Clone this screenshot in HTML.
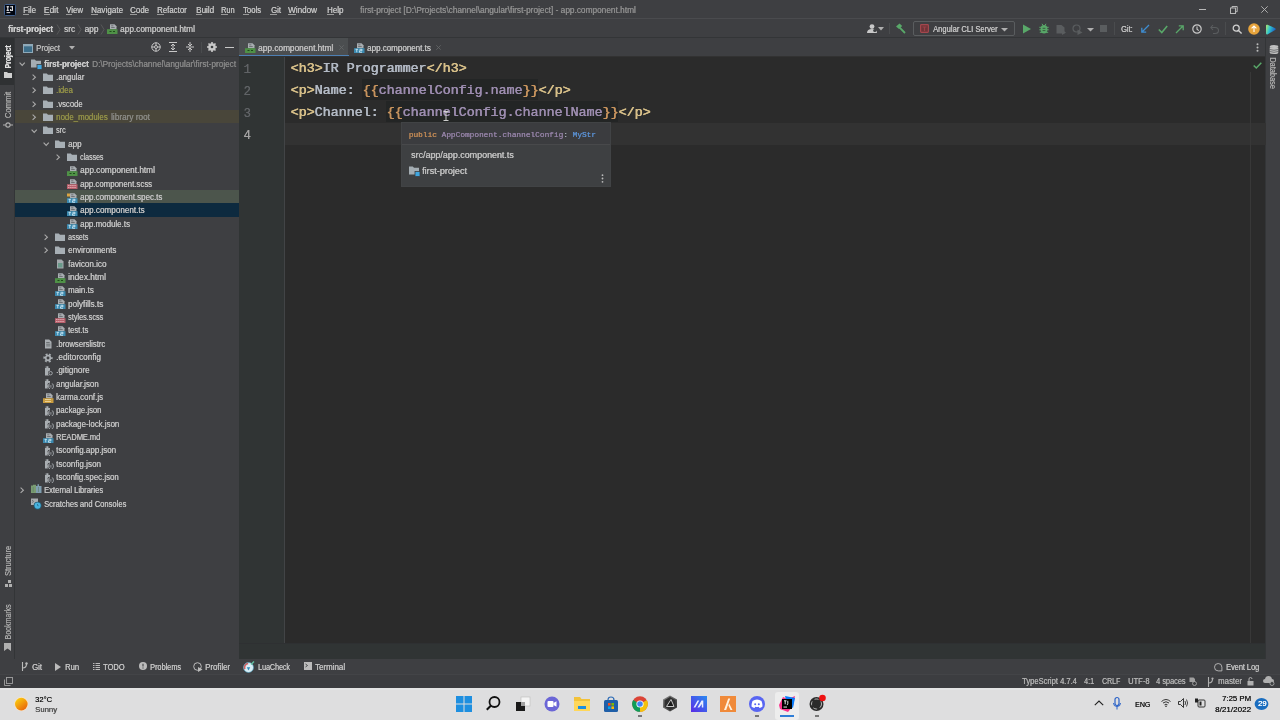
<!DOCTYPE html>
<html><head><meta charset="utf-8">
<style>
*{margin:0;padding:0;box-sizing:border-box}
html,body{-webkit-font-smoothing:antialiased;width:1280px;height:720px;overflow:hidden;background:#3E3F42;font-family:"Liberation Sans",sans-serif;color:#BBBBBB}
.a{position:absolute;white-space:nowrap}
#w div{text-shadow:0.3px 0 0 currentColor}
#w{position:absolute;left:0;top:0;width:1280px;height:720px;will-change:transform;overflow:hidden}
svg.a{overflow:visible}
</style></head><body>
<div id="w"><div class="a" style="left:0px;top:0px;width:1280px;height:720px;background:#3E3F42;"></div>
<div class="a" style="left:0px;top:18px;width:1280px;height:1px;background:#4A4B4E;"></div>
<div class="a" style="left:0px;top:37px;width:1280px;height:1px;background:#333537;"></div>
<div class="a" style="left:0px;top:38px;width:14px;height:621px;background:#3E3F42;"></div>
<div class="a" style="left:0px;top:38px;width:14px;height:47px;background:#2F3133;"></div>
<div class="a" style="left:14px;top:38px;width:1px;height:621px;background:#333537;"></div>
<div class="a" style="left:15px;top:38px;width:224px;height:621px;background:#3E3F42;"></div>
<div class="a" style="left:15px;top:56px;width:224px;height:1px;background:#37393B;"></div>
<div class="a" style="left:239px;top:38px;width:1027px;height:18px;background:#3E3F42;"></div>
<div class="a" style="left:239px;top:56px;width:1027px;height:1px;background:#323232;"></div>
<div class="a" style="left:239px;top:57px;width:46px;height:586px;background:#303434;"></div>
<div class="a" style="left:284px;top:57px;width:1px;height:586px;background:#424446;"></div>
<div class="a" style="left:285px;top:57px;width:981px;height:586px;background:#2B2B2B;"></div>
<div class="a" style="left:239px;top:643px;width:1027px;height:16px;background:#303434;"></div>
<div class="a" style="left:239px;top:643px;width:1027px;height:1px;background:#2E3032;"></div>
<div class="a" style="left:1266px;top:38px;width:14px;height:621px;background:#3E3F42;"></div>
<div class="a" style="left:1265px;top:38px;width:1px;height:621px;background:#333537;"></div>
<div class="a" style="left:0px;top:659px;width:1280px;height:16px;background:#3E3F42;"></div>
<div class="a" style="left:0px;top:675px;width:1280px;height:13px;background:#3C3D40;"></div>
<div class="a" style="left:0px;top:674px;width:1280px;height:1px;background:#434447;"></div>
<div class="a" style="left:0px;top:688px;width:1280px;height:32px;background:#DEDEDF;"></div>
<div class="a" style="left:0px;top:688px;width:1280px;height:1.5px;background:#E4E4E5;"></div>
<svg class="a" style="left:4px;top:4px;" width="12" height="12" viewBox="0 0 12 12"><rect x="0.5" y="0.5" width="11" height="11" rx="1" fill="#000510" stroke="#42608C" stroke-width="1"/><g fill="#F0F0F0"><rect x="2.5" y="2.3" width="2.6" height="1"/><rect x="3.3" y="2.3" width="1" height="4.4"/><rect x="2.5" y="5.8" width="2.6" height="1"/><rect x="6.2" y="2.3" width="2.7" height="1"/><rect x="7.9" y="2.3" width="1" height="4.4"/><rect x="6.1" y="5.8" width="2.8" height="1"/><rect x="6.1" y="5.0" width="0.9" height="1.6"/><rect x="2.5" y="8.2" width="3.8" height="0.9"/></g></svg>
<div class="a" style="left:23.40px;top:3.80px;font-size:8.4px;line-height:12px;color:#C2C2C2;transform:scaleX(0.9604);transform-origin:0 50%;text-decoration:none">File</div>
<div class="a" style="left:23px;top:14px;width:6px;height:0.7px;background:#9A9A9A;"></div>
<div class="a" style="left:43.80px;top:3.80px;font-size:8.4px;line-height:12px;color:#C2C2C2;text-decoration:none">Edit</div>
<div class="a" style="left:44px;top:14px;width:6px;height:0.7px;background:#9A9A9A;"></div>
<div class="a" style="left:65.60px;top:3.80px;font-size:8.4px;line-height:12px;color:#C2C2C2;transform:scaleX(0.9415);transform-origin:0 50%;text-decoration:none">View</div>
<div class="a" style="left:66px;top:14px;width:6px;height:0.7px;background:#9A9A9A;"></div>
<div class="a" style="left:90.60px;top:3.80px;font-size:8.4px;line-height:12px;color:#C2C2C2;transform:scaleX(0.9652);transform-origin:0 50%;text-decoration:none">Navigate</div>
<div class="a" style="left:91px;top:14px;width:7px;height:0.7px;background:#9A9A9A;"></div>
<div class="a" style="left:129.70px;top:3.80px;font-size:8.4px;line-height:12px;color:#C2C2C2;transform:scaleX(0.9461);transform-origin:0 50%;text-decoration:none">Code</div>
<div class="a" style="left:130px;top:14px;width:7px;height:0.7px;background:#9A9A9A;"></div>
<div class="a" style="left:157.00px;top:3.80px;font-size:8.4px;line-height:12px;color:#C2C2C2;transform:scaleX(0.9355);transform-origin:0 50%;text-decoration:none">Refactor</div>
<div class="a" style="left:157px;top:14px;width:7px;height:0.7px;background:#9A9A9A;"></div>
<div class="a" style="left:195.50px;top:3.80px;font-size:8.4px;line-height:12px;color:#C2C2C2;transform:scaleX(0.9636);transform-origin:0 50%;text-decoration:none">Build</div>
<div class="a" style="left:196px;top:14px;width:6px;height:0.7px;background:#9A9A9A;"></div>
<div class="a" style="left:221.30px;top:3.80px;font-size:8.4px;line-height:12px;color:#C2C2C2;transform:scaleX(0.8761);transform-origin:0 50%;text-decoration:none">Run</div>
<div class="a" style="left:221px;top:14px;width:7px;height:0.7px;background:#9A9A9A;"></div>
<div class="a" style="left:243.00px;top:3.80px;font-size:8.4px;line-height:12px;color:#C2C2C2;transform:scaleX(0.9179);transform-origin:0 50%;text-decoration:none">Tools</div>
<div class="a" style="left:243px;top:14px;width:6px;height:0.7px;background:#9A9A9A;"></div>
<div class="a" style="left:270.50px;top:3.80px;font-size:8.4px;line-height:12px;color:#C2C2C2;transform:scaleX(0.9317);transform-origin:0 50%;text-decoration:none">Git</div>
<div class="a" style="left:270px;top:14px;width:7px;height:0.7px;background:#9A9A9A;"></div>
<div class="a" style="left:288.40px;top:3.80px;font-size:8.4px;line-height:12px;color:#C2C2C2;transform:scaleX(0.9707);transform-origin:0 50%;text-decoration:none">Window</div>
<div class="a" style="left:288px;top:14px;width:8px;height:0.7px;background:#9A9A9A;"></div>
<div class="a" style="left:326.70px;top:3.80px;font-size:8.4px;line-height:12px;color:#C2C2C2;transform:scaleX(0.9435);transform-origin:0 50%;text-decoration:none">Help</div>
<div class="a" style="left:327px;top:14px;width:7px;height:0.7px;background:#9A9A9A;"></div>
<div class="a" style="left:359.50px;top:3.80px;font-size:8.4px;line-height:12px;color:#8E8E8E;transform:scaleX(0.9904);transform-origin:0 50%;">first-project [D:\Projects\channel\angular\first-project] - app.component.html</div>
<div class="a" style="left:1198.5px;top:9px;width:7px;height:1px;background:#B8B8B8;"></div>
<svg class="a" style="left:1230px;top:6px;" width="8" height="8" viewBox="0 0 8 8"><rect x="0.5" y="2" width="5" height="5.5" fill="none" stroke="#B8B8B8" stroke-width="1"/><path d="M2 2V0.5h5.2v5.2H5.5" fill="none" stroke="#B8B8B8" stroke-width="1"/></svg>
<svg class="a" style="left:1261px;top:6px;" width="7" height="7" viewBox="0 0 7 7"><path d="M0.3 0.3L6.7 6.7M6.7 0.3L0.3 6.7" stroke="#B8B8B8" stroke-width="0.9"/></svg>
<div class="a" style="left:8.10px;top:23.30px;font-size:8.4px;line-height:12px;color:#CCCCCC;transform:scaleX(0.9642);transform-origin:0 50%;font-weight:bold;">first-project</div>
<svg class="a" style="left:56px;top:24px;" width="5" height="11" viewBox="0 0 5 11"><path d="M1 0.5L4 5.5L1 10.5" fill="none" stroke="#5E6060" stroke-width="0.8"/></svg>
<div class="a" style="left:64.00px;top:23.30px;font-size:8.4px;line-height:12px;color:#C2C2C2;transform:scaleX(0.9824);transform-origin:0 50%;">src</div>
<svg class="a" style="left:77px;top:24px;" width="5" height="11" viewBox="0 0 5 11"><path d="M1 0.5L4 5.5L1 10.5" fill="none" stroke="#5E6060" stroke-width="0.8"/></svg>
<div class="a" style="left:84.40px;top:23.30px;font-size:8.4px;line-height:12px;color:#C2C2C2;">app</div>
<svg class="a" style="left:100px;top:24px;" width="5" height="11" viewBox="0 0 5 11"><path d="M1 0.5L4 5.5L1 10.5" fill="none" stroke="#5E6060" stroke-width="0.8"/></svg>
<svg class="a" style="left:107px;top:24px;" width="11" height="10" viewBox="0 0 11 10"><path d="M3 0.3h4.5l2 2v2.9H3z" fill="#A9AEB2"/><path d="M4.2 1.8h2.2M4.2 3.5h3.5" stroke="#55585A" stroke-width="0.7"/><rect x="0" y="5.2" width="10.5" height="4.8" fill="#4F9147"/><path d="M2.5 7.5h2M6 7.5h2" stroke="#1F4A1A" stroke-width="1.2"/></svg>
<div class="a" style="left:119.50px;top:23.30px;font-size:8.4px;line-height:12px;color:#C2C2C2;transform:scaleX(0.9854);transform-origin:0 50%;">app.component.html</div>
<div class="a" style="left:9.10px;top:56.60px;font-size:8.2px;line-height:10px;color:#E0E0E0;transform:translate(-50%,-50%) rotate(-90deg) scaleX(0.8345);font-weight:bold;">Project</div>
<svg class="a" style="left:4px;top:72px;" width="8" height="6" viewBox="0 0 8 6"><path d="M0 0h3l1 1h4v5H0z" fill="#D0D0D0"/></svg>
<div class="a" style="left:9.10px;top:105.40px;font-size:8.2px;line-height:10px;color:#A8A8A8;transform:translate(-50%,-50%) rotate(-90deg) scaleX(0.9347);">Commit</div>
<svg class="a" style="left:3px;top:121px;" width="10" height="8" viewBox="0 0 10 8"><circle cx="5" cy="4" r="2.2" fill="none" stroke="#B0B0B0" stroke-width="1.2"/><path d="M0 4h2.5M7.5 4H10" stroke="#B0B0B0" stroke-width="1.2"/></svg>
<div class="a" style="left:9.10px;top:561.00px;font-size:8.2px;line-height:10px;color:#A8A8A8;transform:translate(-50%,-50%) rotate(-90deg) scaleX(0.9017);">Structure</div>
<svg class="a" style="left:4px;top:580px;" width="8" height="8" viewBox="0 0 8 8"><rect x="4" y="0" width="3" height="3" fill="#B0B0B0"/><rect x="1" y="4" width="3" height="3" fill="#B0B0B0"/><rect x="5" y="4" width="3" height="3" fill="#B0B0B0"/></svg>
<div class="a" style="left:9.10px;top:621.60px;font-size:8.2px;line-height:10px;color:#A8A8A8;transform:translate(-50%,-50%) rotate(-90deg) scaleX(0.8534);">Bookmarks</div>
<svg class="a" style="left:4px;top:642.5px;" width="7" height="8" viewBox="0 0 7 8"><path d="M0 0h7v8L3.5 5.5L0 8z" fill="#B0B0B0"/></svg>
<svg class="a" style="left:23px;top:43.5px;" width="10" height="9" viewBox="0 0 10 9"><rect x="0.5" y="0.5" width="9" height="8" fill="#3D6E8A" stroke="#8FA9B8" stroke-width="1"/><rect x="0.5" y="0.5" width="9" height="1.8" fill="#8FA9B8"/></svg>
<div class="a" style="left:35.80px;top:41.80px;font-size:8.4px;line-height:12px;color:#BBBBBB;transform:scaleX(0.9180);transform-origin:0 50%;">Project</div>
<svg class="a" style="left:69px;top:46px;" width="6" height="4" viewBox="0 0 6 4"><path d="M0 0h6L3 3.5z" fill="#AFAFAF"/></svg>
<svg class="a" style="left:151px;top:42px;" width="10" height="10" viewBox="0 0 10 10"><circle cx="5" cy="5" r="4.2" fill="none" stroke="#C8C8C8" stroke-width="1"/><circle cx="5" cy="5" r="1.5" fill="none" stroke="#C8C8C8" stroke-width="1"/><path d="M5 0.5v2.5M5 7v2.5M0.5 5h2.5M7 5h2.5" stroke="#C8C8C8" stroke-width="1"/></svg>
<svg class="a" style="left:168px;top:42px;" width="10" height="10" viewBox="0 0 10 10"><path d="M1 0.5h8M1 9.5h8M5 2v6M3 4l2-2 2 2M3 6l2 2 2-2" fill="none" stroke="#C8C8C8" stroke-width="1"/></svg>
<svg class="a" style="left:185px;top:42px;" width="10" height="10" viewBox="0 0 10 10"><path d="M1 5h8M5 0v3.5M3 2l2 2 2-2M5 10V6.5M3 8l2-2 2 2" fill="none" stroke="#C8C8C8" stroke-width="1"/></svg>
<div class="a" style="left:201px;top:42px;width:1px;height:11px;background:#4A4C4E;"></div>
<svg class="a" style="left:207px;top:42px;" width="10" height="10" viewBox="0 0 10 10"><circle cx="5" cy="5" r="2.8" fill="none" stroke="#C8C8C8" stroke-width="2"/><path d="M5 0v10M0 5h10M1.5 1.5l7 7M8.5 1.5l-7 7" stroke="#C8C8C8" stroke-width="1.6"/><circle cx="5" cy="5" r="1.3" fill="#3C3F41"/></svg>
<div class="a" style="left:225px;top:47px;width:9px;height:1.2px;background:#C8C8C8;"></div>
<div class="a" style="left:15px;top:110.0px;width:224px;height:13.0px;background:#49463A;"></div>
<div class="a" style="left:15px;top:190.0px;width:224px;height:13.0px;background:#4C554C;"></div>
<div class="a" style="left:15px;top:203.0px;width:224px;height:13.5px;background:#0D2A3F;"></div>
<svg class="a" style="left:19.3px;top:62.0px;" width="7" height="5" viewBox="0 0 7 5"><path d="M0.6 0.6L3.2 3.4L5.8 0.6" fill="none" stroke="#ABABAB" stroke-width="1.1"/></svg>
<svg class="a" style="left:31px;top:59.2px;" width="12" height="11" viewBox="0 0 12 11"><path d="M0 0.5h3.8l1.2 1.3H10V8.5H0z" fill="#A4ADB3"/><rect x="6" y="5.5" width="5" height="5" fill="#3FA6E0" stroke="#3C3F41" stroke-width="0.8"/></svg>
<div class="a" style="left:43.60px;top:57.80px;font-size:8.4px;line-height:12px;color:#C9C9C9;transform:scaleX(0.9599);transform-origin:0 50%;font-weight:bold;">first-project</div>
<svg class="a" style="left:32.3px;top:74.133px;" width="5" height="7" viewBox="0 0 5 7"><path d="M0.6 0.6L3.4 3.2L0.6 5.8" fill="none" stroke="#ABABAB" stroke-width="1.1"/></svg>
<svg class="a" style="left:43px;top:72.933px;" width="10" height="9" viewBox="0 0 10 9"><path d="M0 0.6h3.8l1.2 1.2H10V7.9H0z" fill="#A7AFB5"/></svg>
<div class="a" style="left:55.60px;top:71.13px;font-size:8.4px;line-height:12px;color:#C2C2C2;transform:scaleX(0.9322);transform-origin:0 50%;">.angular</div>
<svg class="a" style="left:32.3px;top:87.466px;" width="5" height="7" viewBox="0 0 5 7"><path d="M0.6 0.6L3.4 3.2L0.6 5.8" fill="none" stroke="#ABABAB" stroke-width="1.1"/></svg>
<svg class="a" style="left:43px;top:86.266px;" width="10" height="9" viewBox="0 0 10 9"><path d="M0 0.6h3.8l1.2 1.2H10V7.9H0z" fill="#A7AFB5"/></svg>
<div class="a" style="left:55.60px;top:84.47px;font-size:8.4px;line-height:12px;color:#939248;transform:scaleX(0.9168);transform-origin:0 50%;">.idea</div>
<svg class="a" style="left:32.3px;top:100.799px;" width="5" height="7" viewBox="0 0 5 7"><path d="M0.6 0.6L3.4 3.2L0.6 5.8" fill="none" stroke="#ABABAB" stroke-width="1.1"/></svg>
<svg class="a" style="left:43px;top:99.59900000000002px;" width="10" height="9" viewBox="0 0 10 9"><path d="M0 0.6h3.8l1.2 1.2H10V7.9H0z" fill="#A7AFB5"/></svg>
<div class="a" style="left:55.60px;top:97.80px;font-size:8.4px;line-height:12px;color:#C2C2C2;transform:scaleX(0.9154);transform-origin:0 50%;">.vscode</div>
<svg class="a" style="left:32.3px;top:114.132px;" width="5" height="7" viewBox="0 0 5 7"><path d="M0.6 0.6L3.4 3.2L0.6 5.8" fill="none" stroke="#ABABAB" stroke-width="1.1"/></svg>
<svg class="a" style="left:43px;top:112.93200000000002px;" width="10" height="9" viewBox="0 0 10 9"><path d="M0 0.6h3.8l1.2 1.2H10V7.9H0z" fill="#A7AFB5"/></svg>
<div class="a" style="left:55.60px;top:111.13px;font-size:8.4px;line-height:12px;color:#939248;transform:scaleX(0.9399);transform-origin:0 50%;">node_modules</div>
<svg class="a" style="left:31.3px;top:128.66500000000002px;" width="7" height="5" viewBox="0 0 7 5"><path d="M0.6 0.6L3.2 3.4L5.8 0.6" fill="none" stroke="#ABABAB" stroke-width="1.1"/></svg>
<svg class="a" style="left:43px;top:126.26500000000001px;" width="10" height="9" viewBox="0 0 10 9"><path d="M0 0.6h3.8l1.2 1.2H10V7.9H0z" fill="#A7AFB5"/></svg>
<div class="a" style="left:55.60px;top:124.47px;font-size:8.4px;line-height:12px;color:#C2C2C2;transform:scaleX(0.8573);transform-origin:0 50%;">src</div>
<svg class="a" style="left:43.3px;top:141.99800000000002px;" width="7" height="5" viewBox="0 0 7 5"><path d="M0.6 0.6L3.2 3.4L5.8 0.6" fill="none" stroke="#ABABAB" stroke-width="1.1"/></svg>
<svg class="a" style="left:55px;top:139.598px;" width="10" height="9" viewBox="0 0 10 9"><path d="M0 0.6h3.8l1.2 1.2H10V7.9H0z" fill="#A7AFB5"/></svg>
<div class="a" style="left:67.60px;top:137.80px;font-size:8.4px;line-height:12px;color:#C2C2C2;transform:scaleX(0.9632);transform-origin:0 50%;">app</div>
<svg class="a" style="left:56.3px;top:154.131px;" width="5" height="7" viewBox="0 0 5 7"><path d="M0.6 0.6L3.4 3.2L0.6 5.8" fill="none" stroke="#ABABAB" stroke-width="1.1"/></svg>
<svg class="a" style="left:67px;top:152.931px;" width="10" height="9" viewBox="0 0 10 9"><path d="M0 0.6h3.8l1.2 1.2H10V7.9H0z" fill="#A7AFB5"/></svg>
<div class="a" style="left:79.60px;top:151.13px;font-size:8.4px;line-height:12px;color:#C2C2C2;transform:scaleX(0.8354);transform-origin:0 50%;">classes</div>
<svg class="a" style="left:67px;top:165.864px;" width="11" height="10" viewBox="0 0 11 10"><path d="M3 0.3h4.5l2 2v2.9H3z" fill="#A9AEB2"/><path d="M4.2 1.8h2.2M4.2 3.5h3.5" stroke="#55585A" stroke-width="0.7"/><rect x="0" y="5.2" width="10.5" height="4.8" fill="#4F9147"/><path d="M2.5 7.5h2M6 7.5h2" stroke="#1F4A1A" stroke-width="1.2"/></svg>
<div class="a" style="left:79.60px;top:164.46px;font-size:8.4px;line-height:12px;color:#C2C2C2;transform:scaleX(0.9854);transform-origin:0 50%;">app.component.html</div>
<svg class="a" style="left:67px;top:179.197px;" width="11" height="10" viewBox="0 0 11 10"><path d="M3 0.3h4.5l2 2v2.9H3z" fill="#A9AEB2"/><path d="M4.2 1.8h2.2M4.2 3.5h3.5" stroke="#55585A" stroke-width="0.7"/><rect x="0" y="5.2" width="10.5" height="4.8" fill="#B8606C"/><path d="M1 6.5h8.5M1 8.5h8.5" stroke="#E6B8BE" stroke-width="0.8" stroke-dasharray="1.5 0.6"/></svg>
<div class="a" style="left:79.60px;top:177.80px;font-size:8.4px;line-height:12px;color:#C2C2C2;transform:scaleX(0.9371);transform-origin:0 50%;">app.component.scss</div>
<svg class="a" style="left:67px;top:192.53000000000003px;" width="11" height="10" viewBox="0 0 11 10"><path d="M3 0.3h4.5l2 2v2.9H3z" fill="#A9AEB2"/><path d="M4.2 1.8h2.2M4.2 3.5h3.5" stroke="#55585A" stroke-width="0.7"/><rect x="0" y="5.2" width="10.5" height="4.8" fill="#3C8AB0"/><path d="M1.5 6.3h2.5M2.75 6.3v3M5.5 6.3h2.5v1.4H5.5v1.6h2.5" fill="none" stroke="#D8EEF8" stroke-width="0.8"/></svg>
<svg class="a" style="left:67px;top:192.53000000000003px;" width="4" height="4" viewBox="0 0 4 4"><rect x="0" y="0.5" width="3" height="3" fill="#D9A343"/></svg>
<div class="a" style="left:79.60px;top:191.13px;font-size:8.4px;line-height:12px;color:#C2C2C2;transform:scaleX(0.9498);transform-origin:0 50%;">app.component.spec.ts</div>
<svg class="a" style="left:67px;top:205.863px;" width="11" height="10" viewBox="0 0 11 10"><path d="M3 0.3h4.5l2 2v2.9H3z" fill="#A9AEB2"/><path d="M4.2 1.8h2.2M4.2 3.5h3.5" stroke="#55585A" stroke-width="0.7"/><rect x="0" y="5.2" width="10.5" height="4.8" fill="#3C8AB0"/><path d="M1.5 6.3h2.5M2.75 6.3v3M5.5 6.3h2.5v1.4H5.5v1.6h2.5" fill="none" stroke="#D8EEF8" stroke-width="0.8"/></svg>
<div class="a" style="left:79.60px;top:204.46px;font-size:8.4px;line-height:12px;color:#C2C2C2;transform:scaleX(0.9689);transform-origin:0 50%;">app.component.ts</div>
<svg class="a" style="left:67px;top:219.19600000000003px;" width="11" height="10" viewBox="0 0 11 10"><path d="M3 0.3h4.5l2 2v2.9H3z" fill="#A9AEB2"/><path d="M4.2 1.8h2.2M4.2 3.5h3.5" stroke="#55585A" stroke-width="0.7"/><rect x="0" y="5.2" width="10.5" height="4.8" fill="#3C8AB0"/><path d="M1.5 6.3h2.5M2.75 6.3v3M5.5 6.3h2.5v1.4H5.5v1.6h2.5" fill="none" stroke="#D8EEF8" stroke-width="0.8"/></svg>
<div class="a" style="left:79.60px;top:217.80px;font-size:8.4px;line-height:12px;color:#C2C2C2;transform:scaleX(0.9475);transform-origin:0 50%;">app.module.ts</div>
<svg class="a" style="left:44.3px;top:234.129px;" width="5" height="7" viewBox="0 0 5 7"><path d="M0.6 0.6L3.4 3.2L0.6 5.8" fill="none" stroke="#ABABAB" stroke-width="1.1"/></svg>
<svg class="a" style="left:55px;top:232.929px;" width="10" height="9" viewBox="0 0 10 9"><path d="M0 0.6h3.8l1.2 1.2H10V7.9H0z" fill="#A7AFB5"/></svg>
<div class="a" style="left:67.60px;top:231.13px;font-size:8.4px;line-height:12px;color:#C2C2C2;transform:scaleX(0.8341);transform-origin:0 50%;">assets</div>
<svg class="a" style="left:44.3px;top:247.46200000000002px;" width="5" height="7" viewBox="0 0 5 7"><path d="M0.6 0.6L3.4 3.2L0.6 5.8" fill="none" stroke="#ABABAB" stroke-width="1.1"/></svg>
<svg class="a" style="left:55px;top:246.26200000000003px;" width="10" height="9" viewBox="0 0 10 9"><path d="M0 0.6h3.8l1.2 1.2H10V7.9H0z" fill="#A7AFB5"/></svg>
<div class="a" style="left:67.60px;top:244.46px;font-size:8.4px;line-height:12px;color:#C2C2C2;transform:scaleX(0.9598);transform-origin:0 50%;">environments</div>
<svg class="a" style="left:55px;top:259.195px;" width="10" height="10" viewBox="0 0 10 10"><path d="M2 0.5h4.5l2 2V9.5H2z" fill="#A4A9AD"/><rect x="3" y="4" width="4.5" height="4.5" fill="#6A9A8A"/></svg>
<div class="a" style="left:67.60px;top:257.80px;font-size:8.4px;line-height:12px;color:#C2C2C2;transform:scaleX(0.9701);transform-origin:0 50%;">favicon.ico</div>
<svg class="a" style="left:55px;top:272.528px;" width="11" height="10" viewBox="0 0 11 10"><path d="M3 0.3h4.5l2 2v2.9H3z" fill="#A9AEB2"/><path d="M4.2 1.8h2.2M4.2 3.5h3.5" stroke="#55585A" stroke-width="0.7"/><rect x="0" y="5.2" width="10.5" height="4.8" fill="#4F9147"/><path d="M2.5 7.5h2M6 7.5h2" stroke="#1F4A1A" stroke-width="1.2"/></svg>
<div class="a" style="left:67.60px;top:271.13px;font-size:8.4px;line-height:12px;color:#C2C2C2;transform:scaleX(0.9899);transform-origin:0 50%;">index.html</div>
<svg class="a" style="left:55px;top:285.861px;" width="11" height="10" viewBox="0 0 11 10"><path d="M3 0.3h4.5l2 2v2.9H3z" fill="#A9AEB2"/><path d="M4.2 1.8h2.2M4.2 3.5h3.5" stroke="#55585A" stroke-width="0.7"/><rect x="0" y="5.2" width="10.5" height="4.8" fill="#3C8AB0"/><path d="M1.5 6.3h2.5M2.75 6.3v3M5.5 6.3h2.5v1.4H5.5v1.6h2.5" fill="none" stroke="#D8EEF8" stroke-width="0.8"/></svg>
<div class="a" style="left:67.60px;top:284.46px;font-size:8.4px;line-height:12px;color:#C2C2C2;transform:scaleX(0.9492);transform-origin:0 50%;">main.ts</div>
<svg class="a" style="left:55px;top:299.194px;" width="11" height="10" viewBox="0 0 11 10"><path d="M3 0.3h4.5l2 2v2.9H3z" fill="#A9AEB2"/><path d="M4.2 1.8h2.2M4.2 3.5h3.5" stroke="#55585A" stroke-width="0.7"/><rect x="0" y="5.2" width="10.5" height="4.8" fill="#3C8AB0"/><path d="M1.5 6.3h2.5M2.75 6.3v3M5.5 6.3h2.5v1.4H5.5v1.6h2.5" fill="none" stroke="#D8EEF8" stroke-width="0.8"/></svg>
<div class="a" style="left:67.60px;top:297.79px;font-size:8.4px;line-height:12px;color:#C2C2C2;transform:scaleX(0.9681);transform-origin:0 50%;">polyfills.ts</div>
<svg class="a" style="left:55px;top:312.527px;" width="11" height="10" viewBox="0 0 11 10"><path d="M3 0.3h4.5l2 2v2.9H3z" fill="#A9AEB2"/><path d="M4.2 1.8h2.2M4.2 3.5h3.5" stroke="#55585A" stroke-width="0.7"/><rect x="0" y="5.2" width="10.5" height="4.8" fill="#B8606C"/><path d="M1 6.5h8.5M1 8.5h8.5" stroke="#E6B8BE" stroke-width="0.8" stroke-dasharray="1.5 0.6"/></svg>
<div class="a" style="left:67.60px;top:311.13px;font-size:8.4px;line-height:12px;color:#C2C2C2;transform:scaleX(0.8681);transform-origin:0 50%;">styles.scss</div>
<svg class="a" style="left:55px;top:325.86px;" width="11" height="10" viewBox="0 0 11 10"><path d="M3 0.3h4.5l2 2v2.9H3z" fill="#A9AEB2"/><path d="M4.2 1.8h2.2M4.2 3.5h3.5" stroke="#55585A" stroke-width="0.7"/><rect x="0" y="5.2" width="10.5" height="4.8" fill="#3C8AB0"/><path d="M1.5 6.3h2.5M2.75 6.3v3M5.5 6.3h2.5v1.4H5.5v1.6h2.5" fill="none" stroke="#D8EEF8" stroke-width="0.8"/></svg>
<div class="a" style="left:67.60px;top:324.46px;font-size:8.4px;line-height:12px;color:#C2C2C2;transform:scaleX(0.9038);transform-origin:0 50%;">test.ts</div>
<svg class="a" style="left:43px;top:339.193px;" width="10" height="10" viewBox="0 0 10 10"><path d="M2 0.5h4.2l2.3 2.3V9.5H2z" fill="#A9AEB2"/><path d="M3.2 3.5h3.5M3.2 5.2h4.2M3.2 6.9h4.2" stroke="#55585A" stroke-width="0.7"/></svg>
<div class="a" style="left:55.60px;top:337.79px;font-size:8.4px;line-height:12px;color:#C2C2C2;transform:scaleX(0.9185);transform-origin:0 50%;">.browserslistrc</div>
<svg class="a" style="left:43px;top:352.526px;" width="10" height="10" viewBox="0 0 10 10"><circle cx="5" cy="5" r="3.7" fill="none" stroke="#A9AEB2" stroke-width="1.9" stroke-dasharray="1.9 1.97" transform="rotate(-75 5 5)"/><circle cx="5" cy="5" r="2.3" fill="none" stroke="#A9AEB2" stroke-width="1.7"/></svg>
<div class="a" style="left:55.60px;top:351.13px;font-size:8.4px;line-height:12px;color:#C2C2C2;transform:scaleX(0.9833);transform-origin:0 50%;">.editorconfig</div>
<svg class="a" style="left:43px;top:365.859px;" width="11" height="10" viewBox="0 0 11 10"><path d="M2 0.3h3.4v1.8H7V9.6H2z" fill="#A9AEB2"/><path d="M2 0.3h1.4v1.4H2z" fill="#3E3F42"/><circle cx="7.6" cy="7.2" r="2.6" fill="#3E3F42"/><circle cx="7.6" cy="7.2" r="1.7" fill="none" stroke="#A9AEB2" stroke-width="0.9"/></svg>
<div class="a" style="left:55.60px;top:364.46px;font-size:8.4px;line-height:12px;color:#C2C2C2;transform:scaleX(0.9752);transform-origin:0 50%;">.gitignore</div>
<svg class="a" style="left:43px;top:379.192px;" width="11" height="10" viewBox="0 0 11 10"><path d="M2 0.3h3.4v1.8H7V9.6H2z" fill="#A9AEB2"/><path d="M2 0.3h1.4v1.4H2z" fill="#3E3F42"/><g fill="none" stroke-linecap="round"><path d="M6.6 4.8q-1 0-1 1v0.7q0 0.7-0.7 0.7q0.7 0 0.7 0.7v0.7q0 1 1 1M9.2 4.8q1 0 1 1v0.7q0 0.7 0.7 0.7q-0.7 0-0.7 0.7v0.7q0 1-1 1" stroke="#3E3F42" stroke-width="2.2"/><path d="M6.6 4.8q-1 0-1 1v0.7q0 0.7-0.7 0.7q0.7 0 0.7 0.7v0.7q0 1 1 1M9.2 4.8q1 0 1 1v0.7q0 0.7 0.7 0.7q-0.7 0-0.7 0.7v0.7q0 1-1 1" stroke="#A9AEB2" stroke-width="0.9"/><path d="M7.9 6.5v1.8" stroke="#A9AEB2" stroke-width="0.8"/></g></svg>
<div class="a" style="left:55.60px;top:377.79px;font-size:8.4px;line-height:12px;color:#C2C2C2;transform:scaleX(0.9425);transform-origin:0 50%;">angular.json</div>
<svg class="a" style="left:43px;top:392.525px;" width="11" height="10" viewBox="0 0 11 10"><path d="M3 0.3h4.5l2 2v2.9H3z" fill="#A9AEB2"/><path d="M4.2 1.8h2.2M4.2 3.5h3.5" stroke="#55585A" stroke-width="0.7"/><rect x="0" y="5.2" width="10.5" height="4.8" fill="#C99C3F"/><path d="M2 6.5h6M2 8.5h6" stroke="#F0DCAA" stroke-width="0.8"/></svg>
<div class="a" style="left:55.60px;top:391.12px;font-size:8.4px;line-height:12px;color:#C2C2C2;transform:scaleX(0.9409);transform-origin:0 50%;">karma.conf.js</div>
<svg class="a" style="left:43px;top:405.858px;" width="11" height="10" viewBox="0 0 11 10"><path d="M2 0.3h3.4v1.8H7V9.6H2z" fill="#A9AEB2"/><path d="M2 0.3h1.4v1.4H2z" fill="#3E3F42"/><g fill="none" stroke-linecap="round"><path d="M6.6 4.8q-1 0-1 1v0.7q0 0.7-0.7 0.7q0.7 0 0.7 0.7v0.7q0 1 1 1M9.2 4.8q1 0 1 1v0.7q0 0.7 0.7 0.7q-0.7 0-0.7 0.7v0.7q0 1-1 1" stroke="#3E3F42" stroke-width="2.2"/><path d="M6.6 4.8q-1 0-1 1v0.7q0 0.7-0.7 0.7q0.7 0 0.7 0.7v0.7q0 1 1 1M9.2 4.8q1 0 1 1v0.7q0 0.7 0.7 0.7q-0.7 0-0.7 0.7v0.7q0 1-1 1" stroke="#A9AEB2" stroke-width="0.9"/><path d="M7.9 6.5v1.8" stroke="#A9AEB2" stroke-width="0.8"/></g></svg>
<div class="a" style="left:55.60px;top:404.46px;font-size:8.4px;line-height:12px;color:#C2C2C2;transform:scaleX(0.9191);transform-origin:0 50%;">package.json</div>
<svg class="a" style="left:43px;top:419.191px;" width="11" height="10" viewBox="0 0 11 10"><path d="M2 0.3h3.4v1.8H7V9.6H2z" fill="#A9AEB2"/><path d="M2 0.3h1.4v1.4H2z" fill="#3E3F42"/><g fill="none" stroke-linecap="round"><path d="M6.6 4.8q-1 0-1 1v0.7q0 0.7-0.7 0.7q0.7 0 0.7 0.7v0.7q0 1 1 1M9.2 4.8q1 0 1 1v0.7q0 0.7 0.7 0.7q-0.7 0-0.7 0.7v0.7q0 1-1 1" stroke="#3E3F42" stroke-width="2.2"/><path d="M6.6 4.8q-1 0-1 1v0.7q0 0.7-0.7 0.7q0.7 0 0.7 0.7v0.7q0 1 1 1M9.2 4.8q1 0 1 1v0.7q0 0.7 0.7 0.7q-0.7 0-0.7 0.7v0.7q0 1-1 1" stroke="#A9AEB2" stroke-width="0.9"/><path d="M7.9 6.5v1.8" stroke="#A9AEB2" stroke-width="0.8"/></g></svg>
<div class="a" style="left:55.60px;top:417.79px;font-size:8.4px;line-height:12px;color:#C2C2C2;transform:scaleX(0.9429);transform-origin:0 50%;">package-lock.json</div>
<svg class="a" style="left:43px;top:432.524px;" width="11" height="10" viewBox="0 0 11 10"><path d="M3 0.3h4.5l2 2v2.9H3z" fill="#A9AEB2"/><path d="M4.2 1.8h2.2M4.2 3.5h3.5" stroke="#55585A" stroke-width="0.7"/><rect x="0" y="5.2" width="10.5" height="4.8" fill="#3C8AB0"/><path d="M1.5 6.3h2.5M2.75 6.3v3M5.5 6.3h2.5v1.4H5.5v1.6h2.5" fill="none" stroke="#D8EEF8" stroke-width="0.8"/></svg>
<div class="a" style="left:55.60px;top:431.12px;font-size:8.4px;line-height:12px;color:#C2C2C2;transform:scaleX(0.8870);transform-origin:0 50%;">README.md</div>
<svg class="a" style="left:43px;top:445.85699999999997px;" width="11" height="10" viewBox="0 0 11 10"><path d="M2 0.3h3.4v1.8H7V9.6H2z" fill="#A9AEB2"/><path d="M2 0.3h1.4v1.4H2z" fill="#3E3F42"/><g fill="none" stroke-linecap="round"><path d="M6.6 4.8q-1 0-1 1v0.7q0 0.7-0.7 0.7q0.7 0 0.7 0.7v0.7q0 1 1 1M9.2 4.8q1 0 1 1v0.7q0 0.7 0.7 0.7q-0.7 0-0.7 0.7v0.7q0 1-1 1" stroke="#3E3F42" stroke-width="2.2"/><path d="M6.6 4.8q-1 0-1 1v0.7q0 0.7-0.7 0.7q0.7 0 0.7 0.7v0.7q0 1 1 1M9.2 4.8q1 0 1 1v0.7q0 0.7 0.7 0.7q-0.7 0-0.7 0.7v0.7q0 1-1 1" stroke="#A9AEB2" stroke-width="0.9"/><path d="M7.9 6.5v1.8" stroke="#A9AEB2" stroke-width="0.8"/></g></svg>
<div class="a" style="left:55.60px;top:444.46px;font-size:8.4px;line-height:12px;color:#C2C2C2;transform:scaleX(0.9549);transform-origin:0 50%;">tsconfig.app.json</div>
<svg class="a" style="left:43px;top:459.19px;" width="11" height="10" viewBox="0 0 11 10"><path d="M2 0.3h3.4v1.8H7V9.6H2z" fill="#A9AEB2"/><path d="M2 0.3h1.4v1.4H2z" fill="#3E3F42"/><g fill="none" stroke-linecap="round"><path d="M6.6 4.8q-1 0-1 1v0.7q0 0.7-0.7 0.7q0.7 0 0.7 0.7v0.7q0 1 1 1M9.2 4.8q1 0 1 1v0.7q0 0.7 0.7 0.7q-0.7 0-0.7 0.7v0.7q0 1-1 1" stroke="#3E3F42" stroke-width="2.2"/><path d="M6.6 4.8q-1 0-1 1v0.7q0 0.7-0.7 0.7q0.7 0 0.7 0.7v0.7q0 1 1 1M9.2 4.8q1 0 1 1v0.7q0 0.7 0.7 0.7q-0.7 0-0.7 0.7v0.7q0 1-1 1" stroke="#A9AEB2" stroke-width="0.9"/><path d="M7.9 6.5v1.8" stroke="#A9AEB2" stroke-width="0.8"/></g></svg>
<div class="a" style="left:55.60px;top:457.79px;font-size:8.4px;line-height:12px;color:#C2C2C2;transform:scaleX(0.9637);transform-origin:0 50%;">tsconfig.json</div>
<svg class="a" style="left:43px;top:472.52299999999997px;" width="11" height="10" viewBox="0 0 11 10"><path d="M2 0.3h3.4v1.8H7V9.6H2z" fill="#A9AEB2"/><path d="M2 0.3h1.4v1.4H2z" fill="#3E3F42"/><g fill="none" stroke-linecap="round"><path d="M6.6 4.8q-1 0-1 1v0.7q0 0.7-0.7 0.7q0.7 0 0.7 0.7v0.7q0 1 1 1M9.2 4.8q1 0 1 1v0.7q0 0.7 0.7 0.7q-0.7 0-0.7 0.7v0.7q0 1-1 1" stroke="#3E3F42" stroke-width="2.2"/><path d="M6.6 4.8q-1 0-1 1v0.7q0 0.7-0.7 0.7q0.7 0 0.7 0.7v0.7q0 1 1 1M9.2 4.8q1 0 1 1v0.7q0 0.7 0.7 0.7q-0.7 0-0.7 0.7v0.7q0 1-1 1" stroke="#A9AEB2" stroke-width="0.9"/><path d="M7.9 6.5v1.8" stroke="#A9AEB2" stroke-width="0.8"/></g></svg>
<div class="a" style="left:55.60px;top:471.12px;font-size:8.4px;line-height:12px;color:#C2C2C2;transform:scaleX(0.9405);transform-origin:0 50%;">tsconfig.spec.json</div>
<svg class="a" style="left:20.3px;top:487.456px;" width="5" height="7" viewBox="0 0 5 7"><path d="M0.6 0.6L3.4 3.2L0.6 5.8" fill="none" stroke="#ABABAB" stroke-width="1.1"/></svg>
<svg class="a" style="left:31px;top:484.356px;" width="11" height="10" viewBox="0 0 11 10"><path d="M0 1.5h2v-0.8h3v0.8H5V9H0z" fill="#7A9C72"/><path d="M5 2h1.5V0.3h1.5V2h2.5V9H5z" fill="#7F9EB0"/><path d="M2.2 3v5M7.5 3v5" stroke="#5E7A66" stroke-width="0.6"/></svg>
<div class="a" style="left:43.60px;top:484.46px;font-size:8.4px;line-height:12px;color:#C2C2C2;transform:scaleX(0.9064);transform-origin:0 50%;">External Libraries</div>
<svg class="a" style="left:31px;top:498.189px;" width="11" height="12" viewBox="0 0 11 12"><rect x="0" y="0.5" width="7" height="6.5" fill="#A9AEB2"/><path d="M1 2l1.5 1.3L1 4.6" fill="none" stroke="#55585A" stroke-width="0.7"/><circle cx="6.6" cy="7.6" r="3.9" fill="#245E78"/><circle cx="6.6" cy="7.6" r="3.1" fill="#48B4E0"/><path d="M6.4 6.2l0.8 2" stroke="#1F5A78" stroke-width="0.8"/></svg>
<div class="a" style="left:43.60px;top:497.79px;font-size:8.4px;line-height:12px;color:#C2C2C2;transform:scaleX(0.9061);transform-origin:0 50%;">Scratches and Consoles</div>
<div class="a" style="left:92.30px;top:57.80px;font-size:8.4px;line-height:12px;color:#878787;transform:scaleX(0.9818);transform-origin:0 50%;">D:\Projects\channel\angular\first-project</div>
<div class="a" style="left:110.60px;top:111.13px;font-size:8.4px;line-height:12px;color:#8A8A85;transform:scaleX(0.9803);transform-origin:0 50%;">library root</div>
<svg class="a" style="left:867px;top:23.9px;" width="10" height="9" viewBox="0 0 10 9"><circle cx="5" cy="2.6" r="2.4" fill="#C8C8C8"/><path d="M0 9q0-4 5-4q5 0 5 4z" fill="#C8C8C8"/><circle cx="7.8" cy="6.5" r="1.6" fill="#3C3F41"/></svg>
<svg class="a" style="left:878px;top:26.9px;" width="6" height="4" viewBox="0 0 6 4"><path d="M0 0h6L3 3.5z" fill="#AFAFAF"/></svg>
<div class="a" style="left:889px;top:23px;width:1px;height:11px;background:#4A4C4E;"></div>
<svg class="a" style="left:895px;top:22.8px;" width="11" height="11" viewBox="0 0 11 11"><path d="M1 3.5L4.5 0.5L7.2 3L4 6z" fill="#59A869"/><path d="M4.2 4.2L10 10" stroke="#59A869" stroke-width="1.8"/></svg>
<div class="a" style="left:913px;top:21px;width:102px;height:15px;background:transparent;border:1px solid #5A5D5F;border-radius:2px"></div>
<svg class="a" style="left:920px;top:24.0px;" width="9" height="9" viewBox="0 0 9 9"><rect x="0.6" y="0.6" width="7.8" height="7.8" rx="0.8" fill="#6E3438" stroke="#A4474E" stroke-width="1.2"/><path d="M2.6 2.4h3.8v1.1H5.1V7H3.9V3.5H2.6z" fill="#9A4047"/></svg>
<div class="a" style="left:932.70px;top:22.60px;font-size:8.4px;line-height:12px;color:#C2C2C2;transform:scaleX(0.9071);transform-origin:0 50%;">Angular CLI Server</div>
<svg class="a" style="left:1001px;top:27.8px;" width="7" height="4" viewBox="0 0 7 4"><path d="M0 0h7L3.5 3.5z" fill="#AFAFAF"/></svg>
<svg class="a" style="left:1023px;top:23.8px;" width="8" height="10" viewBox="0 0 8 10"><path d="M0 0.5L8 5L0 9.5z" fill="#59A869"/></svg>
<svg class="a" style="left:1039px;top:22.8px;" width="10" height="11" viewBox="0 0 10 11"><ellipse cx="5" cy="6.3" rx="3.4" ry="4.2" fill="#59A869"/><path d="M0.3 4.3h9.4M0.3 6.8h9.4M0.8 9.3h8.4M3 0.8l1 1.6M7 0.8l-1 1.6" stroke="#59A869" stroke-width="1"/><path d="M3.6 5.3h2.8M3.6 7.6h2.8" stroke="#2E4A33" stroke-width="0.8"/></svg>
<svg class="a" style="left:1056px;top:23.8px;" width="11" height="11" viewBox="0 0 11 11"><path d="M0.5 1h5l3 2.5v6h-8z" fill="#5A5D5F"/><path d="M6 6l4 2.5L6 11z" fill="#5A5D5F"/></svg>
<svg class="a" style="left:1072px;top:23.8px;" width="11" height="11" viewBox="0 0 11 11"><circle cx="4.5" cy="4.5" r="3.5" fill="none" stroke="#5A5D5F" stroke-width="1.2"/><path d="M5.5 5.5l5 3l-5 2.5z" fill="#5A5D5F"/></svg>
<svg class="a" style="left:1087px;top:27.8px;" width="7" height="4" viewBox="0 0 7 4"><path d="M0 0h7L3.5 3.5z" fill="#AFAFAF"/></svg>
<div class="a" style="left:1100px;top:25.3px;width:6.5px;height:6.5px;background:#5A5D5F;"></div>
<div class="a" style="left:1114px;top:22px;width:1px;height:13px;background:#4A4C4E;"></div>
<div class="a" style="left:1121.00px;top:22.60px;font-size:8.4px;line-height:12px;color:#C2C2C2;transform:scaleX(0.8954);transform-origin:0 50%;">Git:</div>
<svg class="a" style="left:1140px;top:23.8px;" width="10" height="10" viewBox="0 0 10 10"><path d="M9 1L2 8M1.8 3.8v4.4h4.4" fill="none" stroke="#3E8DD1" stroke-width="1.3"/></svg>
<svg class="a" style="left:1158px;top:24.8px;" width="10" height="9" viewBox="0 0 10 9"><path d="M0.8 4.5L3.8 7.5L9.2 1" fill="none" stroke="#59A869" stroke-width="1.6"/></svg>
<svg class="a" style="left:1175px;top:23.8px;" width="10" height="10" viewBox="0 0 10 10"><path d="M1 9L8 2M3.8 1.8h4.4v4.4" fill="none" stroke="#59A869" stroke-width="1.3"/></svg>
<svg class="a" style="left:1192px;top:23.8px;" width="10" height="10" viewBox="0 0 10 10"><circle cx="5" cy="5" r="4.2" fill="none" stroke="#C8C8C8" stroke-width="1.2"/><path d="M5 2.5V5.3L6.8 6.6" fill="none" stroke="#C8C8C8" stroke-width="1.1"/></svg>
<svg class="a" style="left:1210px;top:23.8px;" width="9" height="10" viewBox="0 0 9 10"><path d="M3 1L0.8 3.5L3 6M1 3.5h4q3.5 0 3.5 3q0 3-3.5 3H3" fill="none" stroke="#5A5D5F" stroke-width="1.1"/></svg>
<div class="a" style="left:1225px;top:22px;width:1px;height:13px;background:#4A4C4E;"></div>
<svg class="a" style="left:1232px;top:23.8px;" width="11" height="11" viewBox="0 0 11 11"><circle cx="4.2" cy="4.2" r="3" fill="none" stroke="#D0D0D0" stroke-width="1.3"/><path d="M6.5 6.5L9.6 9.6" stroke="#D0D0D0" stroke-width="1.4"/></svg>
<svg class="a" style="left:1248px;top:22.8px;" width="12" height="12" viewBox="0 0 12 12"><circle cx="6" cy="6" r="5.8" fill="#E7A43C"/><path d="M6 9V3.2M3.6 5.4L6 3L8.4 5.4" fill="none" stroke="#FFFFFF" stroke-width="1.1"/></svg>
<svg class="a" style="left:1265px;top:23.5px;" width="12" height="11" viewBox="0 0 12 11"><defs><linearGradient id="tb" x1="0" y1="0" x2="1" y2="0.3"><stop offset="0" stop-color="#B5E86A"/><stop offset="0.45" stop-color="#2EC4D0"/><stop offset="1" stop-color="#1F5FC0"/></linearGradient></defs><path d="M1 1.8Q1 0.2 2.6 0.8L10.2 4.2Q11.4 5 10.2 6L2.8 10.2Q1 11 1 9.3z" fill="url(#tb)"/></svg>
<div class="a" style="left:239px;top:38px;width:109px;height:18px;background:#4B4E50;"></div>
<div class="a" style="left:239px;top:54.6px;width:109.5px;height:1.9px;background:#4E80B4;"></div>
<svg class="a" style="left:245px;top:42.5px;" width="11" height="10" viewBox="0 0 11 10"><path d="M3 0.3h4.5l2 2v2.9H3z" fill="#A9AEB2"/><path d="M4.2 1.8h2.2M4.2 3.5h3.5" stroke="#55585A" stroke-width="0.7"/><rect x="0" y="5.2" width="10.5" height="4.8" fill="#4F9147"/><path d="M2.5 7.5h2M6 7.5h2" stroke="#1F4A1A" stroke-width="1.2"/></svg>
<div class="a" style="left:258.20px;top:41.80px;font-size:8.4px;line-height:12px;color:#C2C2C2;transform:scaleX(0.9906);transform-origin:0 50%;">app.component.html</div>
<svg class="a" style="left:338.6px;top:45.3px;" width="5" height="5" viewBox="0 0 5 5"><path d="M0.3 0.3L4.7 4.7M4.7 0.3L0.3 4.7" stroke="#66686A" stroke-width="0.8"/></svg>
<svg class="a" style="left:353.5px;top:42.5px;" width="11" height="10" viewBox="0 0 11 10"><path d="M3 0.3h4.5l2 2v2.9H3z" fill="#A9AEB2"/><path d="M4.2 1.8h2.2M4.2 3.5h3.5" stroke="#55585A" stroke-width="0.7"/><rect x="0" y="5.2" width="10.5" height="4.8" fill="#3C8AB0"/><path d="M1.5 6.3h2.5M2.75 6.3v3M5.5 6.3h2.5v1.4H5.5v1.6h2.5" fill="none" stroke="#D8EEF8" stroke-width="0.8"/></svg>
<div class="a" style="left:367.00px;top:41.80px;font-size:8.4px;line-height:12px;color:#C2C2C2;transform:scaleX(0.9569);transform-origin:0 50%;">app.component.ts</div>
<svg class="a" style="left:436.4px;top:45.3px;" width="5" height="5" viewBox="0 0 5 5"><path d="M0.3 0.3L4.7 4.7M4.7 0.3L0.3 4.7" stroke="#66686A" stroke-width="0.8"/></svg>
<svg class="a" style="left:1256px;top:43px;" width="3" height="9" viewBox="0 0 3 9"><circle cx="1.5" cy="1.2" r="1" fill="#BBBBBB"/><circle cx="1.5" cy="4.5" r="1" fill="#BBBBBB"/><circle cx="1.5" cy="7.8" r="1" fill="#BBBBBB"/></svg>
<svg class="a" style="left:1269px;top:45px;" width="10" height="9" viewBox="0 0 10 9"><ellipse cx="5" cy="1.6" rx="4.3" ry="1.5" fill="#C0C0C0"/><path d="M0.7 2.5v5q0 1.5 4.3 1.5t4.3-1.5v-5" fill="#C0C0C0"/><path d="M0.7 4.5q4.3 1.6 8.6 0M0.7 6.5q4.3 1.6 8.6 0" stroke="#3C3F41" stroke-width="0.6" fill="none"/></svg>
<div class="a" style="left:1272.30px;top:72.70px;font-size:8.2px;line-height:10px;color:#A8A8A8;transform:translate(-50%,-50%) rotate(90deg) scaleX(0.9002);">Database</div>
<div class="a" style="left:285px;top:123px;width:981px;height:22px;background:#323232;"></div>
<div class="a" style="left:1250px;top:72px;width:1px;height:571px;background:#383838;"></div>
<svg class="a" style="left:1253.3px;top:61.8px;" width="9" height="7" viewBox="0 0 9 7"><path d="M0.7 3.5L3.3 6L8.3 0.8" fill="none" stroke="#59A869" stroke-width="1.5"/></svg>
<div class="a" style="left:243.50px;top:62.00px;font-size:12.2px;line-height:16px;color:#606366;font-family:'Liberation Mono',monospace;">1</div>
<div class="a" style="left:243.50px;top:84.00px;font-size:12.2px;line-height:16px;color:#606366;font-family:'Liberation Mono',monospace;">2</div>
<div class="a" style="left:243.50px;top:106.00px;font-size:12.2px;line-height:16px;color:#606366;font-family:'Liberation Mono',monospace;">3</div>
<div class="a" style="left:243.50px;top:128.00px;font-size:12.2px;line-height:16px;color:#A4A3A3;font-family:'Liberation Mono',monospace;">4</div>
<div class="a" style="left:361.5px;top:79px;width:176px;height:21px;background:#232525;"></div>
<div class="a" style="left:385.5px;top:101px;width:232px;height:21px;background:#232525;"></div>
<div class="a" style="left:290.60px;top:61.00px;font-size:13.33px;line-height:16px;color:#D9C18A;font-family:'Liberation Mono',monospace;-webkit-text-stroke:0.2px currentColor;">&lt;h3&gt;</div>
<div class="a" style="left:322.60px;top:61.00px;font-size:13.33px;line-height:16px;color:#B3BAC5;font-family:'Liberation Mono',monospace;-webkit-text-stroke:0.2px currentColor;">IR Programmer</div>
<div class="a" style="left:426.60px;top:61.00px;font-size:13.33px;line-height:16px;color:#D9C18A;font-family:'Liberation Mono',monospace;-webkit-text-stroke:0.2px currentColor;">&lt;/h3&gt;</div>
<div class="a" style="left:290.60px;top:82.90px;font-size:13.33px;line-height:16px;color:#D9C18A;font-family:'Liberation Mono',monospace;-webkit-text-stroke:0.2px currentColor;">&lt;p&gt;</div>
<div class="a" style="left:314.60px;top:82.90px;font-size:13.33px;line-height:16px;color:#B3BAC5;font-family:'Liberation Mono',monospace;-webkit-text-stroke:0.2px currentColor;">Name: </div>
<div class="a" style="left:362.60px;top:82.90px;font-size:13.33px;line-height:16px;color:#C9955F;font-family:'Liberation Mono',monospace;-webkit-text-stroke:0.2px currentColor;">{{</div>
<div class="a" style="left:378.60px;top:82.90px;font-size:13.33px;line-height:16px;color:#9D8DB0;font-family:'Liberation Mono',monospace;-webkit-text-stroke:0.2px currentColor;">channelConfig.name</div>
<div class="a" style="left:522.60px;top:82.90px;font-size:13.33px;line-height:16px;color:#C9955F;font-family:'Liberation Mono',monospace;-webkit-text-stroke:0.2px currentColor;">}}</div>
<div class="a" style="left:538.60px;top:82.90px;font-size:13.33px;line-height:16px;color:#D9C18A;font-family:'Liberation Mono',monospace;-webkit-text-stroke:0.2px currentColor;">&lt;/p&gt;</div>
<div class="a" style="left:290.60px;top:104.80px;font-size:13.33px;line-height:16px;color:#D9C18A;font-family:'Liberation Mono',monospace;-webkit-text-stroke:0.2px currentColor;">&lt;p&gt;</div>
<div class="a" style="left:314.60px;top:104.80px;font-size:13.33px;line-height:16px;color:#B3BAC5;font-family:'Liberation Mono',monospace;-webkit-text-stroke:0.2px currentColor;">Channel: </div>
<div class="a" style="left:386.60px;top:104.80px;font-size:13.33px;line-height:16px;color:#C9955F;font-family:'Liberation Mono',monospace;-webkit-text-stroke:0.2px currentColor;">{{</div>
<div class="a" style="left:402.60px;top:104.80px;font-size:13.33px;line-height:16px;color:#9D8DB0;font-family:'Liberation Mono',monospace;-webkit-text-stroke:0.2px currentColor;">channelConfig.channelName</div>
<div class="a" style="left:602.60px;top:104.80px;font-size:13.33px;line-height:16px;color:#C9955F;font-family:'Liberation Mono',monospace;-webkit-text-stroke:0.2px currentColor;">}}</div>
<div class="a" style="left:618.60px;top:104.80px;font-size:13.33px;line-height:16px;color:#D9C18A;font-family:'Liberation Mono',monospace;-webkit-text-stroke:0.2px currentColor;">&lt;/p&gt;</div>
<svg class="a" style="left:443px;top:111px;" width="6" height="10" viewBox="0 0 6 10"><path d="M0.5 0.5h5M0.5 9.5h5M3 0.5v9" stroke="#DDDDDD" stroke-width="0.9"/></svg>
<div class="a" style="left:401px;top:122px;width:210px;height:64.5px;background:#3E4042;border:1px solid #414345"></div>
<div class="a" style="left:402px;top:123px;width:208px;height:21px;background:#3B3C3F;"></div>
<div class="a" style="left:402px;top:144px;width:208px;height:1px;background:#48494B;"></div>
<div class="a" style="left:408.70px;top:130.30px;font-size:7.8px;line-height:10px;color:#C28A55;font-family:'Liberation Mono',monospace;">public </div>
<div class="a" style="left:441.46px;top:130.30px;font-size:7.8px;line-height:10px;color:#9482A6;font-family:'Liberation Mono',monospace;">AppComponent.channelConfig</div>
<div class="a" style="left:563.14px;top:130.30px;font-size:7.8px;line-height:10px;color:#A9B0B8;font-family:'Liberation Mono',monospace;">: </div>
<div class="a" style="left:572.50px;top:130.30px;font-size:7.8px;line-height:10px;color:#5A8FD0;font-family:'Liberation Mono',monospace;">MyStr</div>
<div class="a" style="left:411.30px;top:149.40px;font-size:8.4px;line-height:12px;color:#C2C2C2;transform:scaleX(1.0656);transform-origin:0 50%;">src/app/app.component.ts</div>
<svg class="a" style="left:409px;top:165.5px;" width="12" height="11" viewBox="0 0 12 11"><path d="M0 0.5h3.8l1.2 1.3H10V8.5H0z" fill="#A4ADB3"/><rect x="6" y="5.5" width="5" height="5" fill="#3FA6E0" stroke="#3C3F41" stroke-width="0.8"/></svg>
<div class="a" style="left:421.60px;top:164.80px;font-size:8.4px;line-height:12px;color:#C2C2C2;transform:scaleX(1.0832);transform-origin:0 50%;">first-project</div>
<svg class="a" style="left:600.5px;top:174px;" width="3" height="9" viewBox="0 0 3 9"><circle cx="1.5" cy="1.2" r="0.9" fill="#BBBBBB"/><circle cx="1.5" cy="4.5" r="0.9" fill="#BBBBBB"/><circle cx="1.5" cy="7.8" r="0.9" fill="#BBBBBB"/></svg>
<svg class="a" style="left:21px;top:662px;" width="7" height="9" viewBox="0 0 7 9"><path d="M1.5 0v9M1.5 6q4 0 4-4" fill="none" stroke="#BBBBBB" stroke-width="1.1"/><circle cx="5.5" cy="1.5" r="1.2" fill="#BBBBBB"/></svg>
<div class="a" style="left:32.00px;top:661.40px;font-size:8.4px;line-height:12px;color:#C2C2C2;transform:scaleX(0.9317);transform-origin:0 50%;">Git</div>
<svg class="a" style="left:55px;top:663px;" width="6" height="8" viewBox="0 0 6 8"><path d="M0 0L6 4L0 8z" fill="#BBBBBB"/></svg>
<div class="a" style="left:65.00px;top:661.40px;font-size:8.4px;line-height:12px;color:#C2C2C2;transform:scaleX(0.9085);transform-origin:0 50%;">Run</div>
<svg class="a" style="left:93px;top:663px;" width="7" height="7" viewBox="0 0 7 7"><path d="M0 0.5h1.5M2.5 0.5H7M0 2.5h1.5M2.5 2.5H7M0 4.5h1.5M2.5 4.5H7M0 6.5h1.5M2.5 6.5H7" stroke="#BBBBBB" stroke-width="1"/></svg>
<div class="a" style="left:103.00px;top:661.40px;font-size:8.4px;line-height:12px;color:#C2C2C2;transform:scaleX(0.8916);transform-origin:0 50%;">TODO</div>
<svg class="a" style="left:139px;top:662px;" width="8" height="8" viewBox="0 0 8 8"><circle cx="4" cy="4" r="4" fill="#BBBBBB"/><path d="M4 1.8v2.8M4 5.6v1" stroke="#3C3F41" stroke-width="1.1"/></svg>
<div class="a" style="left:149.50px;top:661.40px;font-size:8.4px;line-height:12px;color:#C2C2C2;transform:scaleX(0.8737);transform-origin:0 50%;">Problems</div>
<svg class="a" style="left:193px;top:662px;" width="10" height="10" viewBox="0 0 10 10"><circle cx="4.5" cy="4.5" r="3.8" fill="none" stroke="#BBBBBB" stroke-width="1"/><path d="M5 5l4.5 2.5L5 10z" fill="#BBBBBB"/></svg>
<div class="a" style="left:205.00px;top:661.40px;font-size:8.4px;line-height:12px;color:#C2C2C2;transform:scaleX(0.9396);transform-origin:0 50%;">Profiler</div>
<svg class="a" style="left:243px;top:661px;" width="12" height="12" viewBox="0 0 12 12"><circle cx="5.5" cy="6.5" r="5" fill="#D8EEF6"/><path d="M1 8.5A5 5 0 0 1 5 1.5L5.3 3.2A3.4 3.4 0 0 0 2.6 7.8z" fill="#D65F5F"/><path d="M3.8 6.2h3.4L5.5 9.6z" fill="#2D8AB8"/><circle cx="5.5" cy="6.5" r="5" fill="none" stroke="#4A9AB8" stroke-width="0.6"/><path d="M8 3.5L11 0.5" stroke="#5FC0A0" stroke-width="1.5"/></svg>
<div class="a" style="left:257.50px;top:661.40px;font-size:8.4px;line-height:12px;color:#C2C2C2;transform:scaleX(0.8460);transform-origin:0 50%;">LuaCheck</div>
<svg class="a" style="left:304px;top:662px;" width="8" height="8" viewBox="0 0 8 8"><rect x="0" y="0" width="8" height="8" fill="#BBBBBB"/><path d="M1.5 2l2 1.5l-2 1.5" fill="none" stroke="#3C3F41" stroke-width="0.9"/></svg>
<div class="a" style="left:315.00px;top:661.40px;font-size:8.4px;line-height:12px;color:#C2C2C2;transform:scaleX(0.9451);transform-origin:0 50%;">Terminal</div>
<svg class="a" style="left:1214px;top:663px;" width="9" height="9" viewBox="0 0 9 9"><path d="M4.2 0.5A3.7 3.7 0 0 0 0.5 4.2A3.7 3.7 0 0 0 4.2 7.9H7.9V4.2A3.7 3.7 0 0 0 4.2 0.5z" fill="none" stroke="#BBBBBB" stroke-width="0.9"/></svg>
<div class="a" style="left:1225.50px;top:661.40px;font-size:8.4px;line-height:12px;color:#C2C2C2;transform:scaleX(0.8776);transform-origin:0 50%;">Event Log</div>
<svg class="a" style="left:4px;top:677px;" width="9" height="9" viewBox="0 0 9 9"><rect x="2.5" y="0.5" width="6" height="6" fill="none" stroke="#A0A0A0" stroke-width="0.9"/><path d="M0.5 2.5v6h6" fill="none" stroke="#A0A0A0" stroke-width="0.9"/></svg>
<div class="a" style="left:1021.60px;top:675.40px;font-size:8.4px;line-height:12px;color:#B0B0B0;transform:scaleX(0.9044);transform-origin:0 50%;">TypeScript 4.7.4</div>
<div class="a" style="left:1083.80px;top:675.40px;font-size:8.4px;line-height:12px;color:#B0B0B0;transform:scaleX(0.8564);transform-origin:0 50%;">4:1</div>
<div class="a" style="left:1101.80px;top:675.40px;font-size:8.4px;line-height:12px;color:#B0B0B0;transform:scaleX(0.8297);transform-origin:0 50%;">CRLF</div>
<div class="a" style="left:1127.60px;top:675.40px;font-size:8.4px;line-height:12px;color:#B0B0B0;transform:scaleX(0.8992);transform-origin:0 50%;">UTF-8</div>
<div class="a" style="left:1156.40px;top:675.40px;font-size:8.4px;line-height:12px;color:#B0B0B0;transform:scaleX(0.8804);transform-origin:0 50%;">4 spaces</div>
<div class="a" style="left:1217.50px;top:675.40px;font-size:8.4px;line-height:12px;color:#B0B0B0;transform:scaleX(0.9349);transform-origin:0 50%;">master</div>
<svg class="a" style="left:1189px;top:677px;" width="8" height="9" viewBox="0 0 8 9"><path d="M0.5 0.5h4l1.5 1.5v3H0.5z" fill="#A0A0A0"/><circle cx="5.5" cy="6.5" r="2" fill="none" stroke="#A0A0A0" stroke-width="0.9"/></svg>
<svg class="a" style="left:1207px;top:677px;" width="7" height="10" viewBox="0 0 7 10"><path d="M1.5 0v10M1.5 6q4 0 4-4" fill="none" stroke="#B0B0B0" stroke-width="1.1"/><circle cx="5.5" cy="1.5" r="1.1" fill="#B0B0B0"/></svg>
<svg class="a" style="left:1247px;top:677px;" width="8" height="9" viewBox="0 0 8 9"><rect x="0.5" y="4" width="6" height="4.5" fill="#B0B0B0"/><path d="M2 4V2q0-1.5 1.5-1.5t1.5 1.5" fill="none" stroke="#B0B0B0" stroke-width="1"/></svg>
<svg class="a" style="left:1263px;top:676px;" width="12" height="10" viewBox="0 0 12 10"><path d="M2 7q-2 0-2-2t2-2q0.5-3 3.5-3t3.5 3q2 0 2 2t-2 2z" fill="#B0B0B0"/><circle cx="9" cy="7.5" r="2" fill="#3C3F41" stroke="#B0B0B0" stroke-width="0.8"/></svg>
<svg class="a" style="left:14px;top:696.5px;" width="15" height="15" viewBox="0 0 15 15"><defs><linearGradient id="sun" x1="0.2" y1="0.1" x2="0.8" y2="0.9"><stop offset="0" stop-color="#F9C80E"/><stop offset="1" stop-color="#E9680C"/></linearGradient></defs><circle cx="7.3" cy="7.1" r="7" fill="#FBE3C0"/><circle cx="7.3" cy="7.1" r="6.3" fill="url(#sun)"/></svg>
<div class="a" style="left:34.50px;top:694.80px;font-size:8px;line-height:10px;color:#1A1A1A;transform:scaleX(0.9510);transform-origin:0 50%;">32°C</div>
<div class="a" style="left:34.50px;top:705.30px;font-size:8px;line-height:10px;color:#505050;transform:scaleX(0.9698);transform-origin:0 50%;">Sunny</div>
<svg class="a" style="left:456px;top:696px;" width="16" height="16" viewBox="0 0 16 16"><rect x="0" y="0" width="7.5" height="7.5" fill="#1E8FE0"/><rect x="8.5" y="0" width="7.5" height="7.5" fill="#1E8FE0"/><rect x="0" y="8.5" width="7.5" height="7.5" fill="#1E8FE0"/><rect x="8.5" y="8.5" width="7.5" height="7.5" fill="#1E8FE0"/></svg>
<svg class="a" style="left:486px;top:696px;" width="15" height="15" viewBox="0 0 15 15"><circle cx="8.5" cy="6" r="5" fill="none" stroke="#111111" stroke-width="1.8"/><path d="M5 9.5L0.8 13.8" stroke="#111111" stroke-width="2"/></svg>
<svg class="a" style="left:515px;top:696px;" width="16" height="16" viewBox="0 0 16 16"><rect x="6" y="1" width="9" height="9" fill="#F4F4F4" stroke="#BBBBBB" stroke-width="0.6"/><rect x="1" y="6" width="9" height="9" fill="#1A1A1A"/><rect x="6" y="6" width="4" height="4" fill="#A0A0A0"/></svg>
<svg class="a" style="left:544px;top:696px;" width="16" height="16" viewBox="0 0 16 16"><circle cx="8" cy="8" r="7.5" fill="#6B66D6"/><rect x="3.5" y="5" width="6" height="6" rx="1" fill="#FFFFFF"/><path d="M9.5 7l3-1.8v5.6l-3-1.8z" fill="#FFFFFF"/></svg>
<svg class="a" style="left:574px;top:696px;" width="16" height="15" viewBox="0 0 16 15"><path d="M0 1h6l1.5 2H16v12H0z" fill="#F2C23A"/><rect x="0" y="5" width="16" height="10" fill="#FFD75A"/><rect x="4" y="10" width="8" height="3" fill="#1E8FE0"/></svg>
<svg class="a" style="left:603px;top:696px;" width="16" height="16" viewBox="0 0 16 16"><path d="M5 4q0-3 3-3t3 3" fill="none" stroke="#2B6AB5" stroke-width="1.2"/><rect x="1" y="4" width="14" height="12" rx="1.5" fill="#1F5FA8"/><rect x="5" y="7" width="2.6" height="2.6" fill="#F25022"/><rect x="8.4" y="7" width="2.6" height="2.6" fill="#7FBA00"/><rect x="5" y="10.4" width="2.6" height="2.6" fill="#00A4EF"/><rect x="8.4" y="10.4" width="2.6" height="2.6" fill="#FFB900"/></svg>
<svg class="a" style="left:632px;top:696px;" width="16" height="16" viewBox="0 0 16 16"><circle cx="8" cy="8" r="7.8" fill="#DB4437"/><path d="M8 8L14.8 4.1A7.8 7.8 0 0 1 8 15.8z" fill="#F4C20D"/><path d="M8 8V15.8A7.8 7.8 0 0 1 1.2 4.1z" fill="#0F9D58"/><circle cx="8" cy="8" r="3.6" fill="#FFFFFF"/><circle cx="8" cy="8" r="2.8" fill="#4285F4"/></svg>
<svg class="a" style="left:662px;top:695px;" width="16" height="17" viewBox="0 0 16 17"><defs><linearGradient id="hx" x1="0" y1="0" x2="1" y2="1"><stop offset="0" stop-color="#8A8A8A"/><stop offset="1" stop-color="#2A2A2A"/></linearGradient></defs><path d="M8 0.5L15 4.5V12.5L8 16.5L1 12.5V4.5z" fill="url(#hx)"/><path d="M8 2L13.5 5.2V11.8L8 15L2.5 11.8V5.2z" fill="#303030"/><path d="M9 4.5L12 11.5H4.5z" fill="#1A1A1A" stroke="#C8C8C8" stroke-width="1"/></svg>
<svg class="a" style="left:691px;top:696px;" width="16" height="16" viewBox="0 0 16 16"><defs><linearGradient id="mg" x1="1" y1="0" x2="0" y2="1"><stop offset="0" stop-color="#2A8AF0"/><stop offset="1" stop-color="#5A2BE6"/></linearGradient></defs><rect x="0" y="0" width="16" height="16" fill="url(#mg)"/><path d="M2.5 11.5L6.5 4.5h1.8L4.3 11.5zM6.5 11.5l4-7h1.8v7h-1.5v-3.5L8.3 11.5z" fill="#E8ECFF"/></svg>
<svg class="a" style="left:720px;top:696px;" width="16" height="16" viewBox="0 0 16 16"><rect x="0" y="0" width="16" height="16" fill="#F08A3A"/><path d="M4 14L8.2 2.5h2L6.2 14zM9.2 7.5L12.5 14h-2L8.4 9.5z" fill="#FFF3E0"/></svg>
<svg class="a" style="left:749px;top:696px;" width="16" height="16" viewBox="0 0 16 16"><circle cx="8" cy="8" r="8" fill="#5865F2"/><path d="M3.5 5q2-1.5 4.5-1.5T12.5 5q1 2.5 1 5.5q-1.5 1.3-3 1.5L9.8 10.8q-1.8 0.5-3.6 0L5.5 12q-1.5-0.2-3-1.5q0-3 1-5.5z" fill="#FFFFFF"/><circle cx="6.2" cy="8.2" r="1" fill="#5865F2"/><circle cx="9.8" cy="8.2" r="1" fill="#5865F2"/></svg>
<div class="a" style="left:775px;top:692px;width:24px;height:28px;background:#EDEDED;border-radius:3px"></div>
<svg class="a" style="left:779px;top:696px;" width="16" height="16" viewBox="0 0 16 16"><path d="M0 9L4 1L9 3L16 0L14 10L9 16L1 13z" fill="#FC318C"/><path d="M6 0L16 2L14 12L8 8z" fill="#087CFA"/><rect x="3" y="3" width="10" height="10" fill="#000000"/><path d="M5 4.8h2.5M6.2 4.8v3.5M8.8 4.8v3q0 1-1 1" stroke="#FFFFFF" stroke-width="0.9" fill="none"/><rect x="4.5" y="10.6" width="3.5" height="0.9" fill="#FFFFFF"/></svg>
<svg class="a" style="left:808px;top:695px;" width="17" height="17" viewBox="0 0 17 17"><circle cx="8.5" cy="9" r="7" fill="#2B2B2B"/><circle cx="8.5" cy="9" r="5" fill="none" stroke="#DDDDDD" stroke-width="0.8" stroke-dasharray="4 3"/><circle cx="14.5" cy="3" r="3.3" fill="#EE1111"/></svg>
<div class="a" style="left:638px;top:715px;width:4px;height:1.5px;background:#777777;"></div>
<div class="a" style="left:755px;top:715px;width:4px;height:1.5px;background:#777777;"></div>
<div class="a" style="left:780px;top:715px;width:14px;height:2px;background:#2E7DD7;"></div>
<div class="a" style="left:814.5px;top:715px;width:4px;height:1.5px;background:#777777;"></div>
<svg class="a" style="left:1094px;top:700px;" width="10" height="6" viewBox="0 0 10 6"><path d="M0.8 5.2L5 1L9.2 5.2" fill="none" stroke="#222222" stroke-width="1.1"/></svg>
<svg class="a" style="left:1113px;top:697px;" width="8" height="13" viewBox="0 0 8 13"><rect x="2" y="0.5" width="4" height="8" rx="2" fill="none" stroke="#2A62C8" stroke-width="1.2"/><path d="M0.5 6q0 3.5 3.5 3.5T7.5 6M4 9.5v3" fill="none" stroke="#2A62C8" stroke-width="1"/></svg>
<div class="a" style="left:1134.70px;top:699.50px;font-size:8px;line-height:10px;color:#1A1A1A;transform:scaleX(0.8825);transform-origin:0 50%;">ENG</div>
<svg class="a" style="left:1161px;top:698px;" width="10" height="9" viewBox="0 0 10 9"><path d="M0.5 3.5q4.5-4 9 0M2 5q3-2.5 6 0M3.5 6.8q1.5-1.2 3 0" fill="none" stroke="#222222" stroke-width="0.9"/><circle cx="5" cy="8.2" r="0.8" fill="#222222"/></svg>
<svg class="a" style="left:1178px;top:698px;" width="11" height="10" viewBox="0 0 11 10"><path d="M0.5 3.5h2l3-3v9l-3-3h-2z" fill="none" stroke="#222222" stroke-width="0.9"/><path d="M7 3q1.2 2 0 4M8.5 1.5q2.2 3.5 0 7" fill="none" stroke="#222222" stroke-width="0.8"/></svg>
<svg class="a" style="left:1195px;top:698px;" width="11" height="10" viewBox="0 0 11 10"><rect x="3" y="2" width="7" height="7" rx="1" fill="none" stroke="#222222" stroke-width="0.9"/><rect x="4.5" y="3.5" width="2" height="4" fill="#222222"/><path d="M0 0.5h3v4H0z" fill="#222222"/></svg>
<div class="a" style="left:1222.00px;top:694.00px;font-size:8px;line-height:10px;color:#1A1A1A;transform:scaleX(0.9734);transform-origin:0 50%;">7:25 PM</div>
<div class="a" style="left:1215.00px;top:704.50px;font-size:8px;line-height:10px;color:#1A1A1A;transform:scaleX(1.0115);transform-origin:0 50%;">8/21/2022</div>
<svg class="a" style="left:1254px;top:697px;" width="15" height="14" viewBox="0 0 15 14"><ellipse cx="7.5" cy="7" rx="6.9" ry="5.9" fill="#1A6DBF"/></svg>
<div class="a" style="left:1257.50px;top:699.20px;font-size:7.8px;line-height:10px;color:#FFFFFF;transform:scaleX(0.9797);transform-origin:0 50%;">29</div>
</div></body></html>
